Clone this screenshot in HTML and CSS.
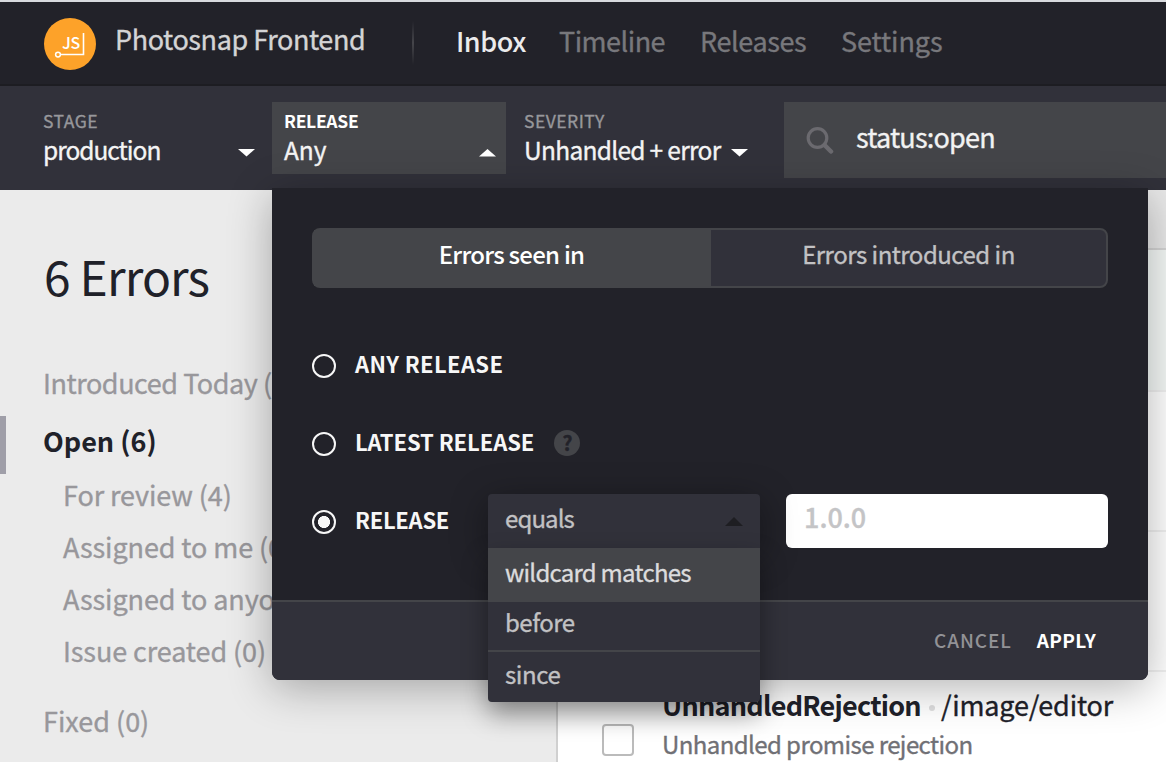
FILE: index.html
```html
<!DOCTYPE html>
<html lang="en">
<head>
<meta charset="utf-8">
<title>Photosnap Frontend – Inbox</title>
<link rel="stylesheet" href="styles.css">
</head>
<body>
<header class="topbar">
  <svg class="logo" width="52" height="52" viewBox="0 0 52 52">
    <circle cx="26" cy="26" r="26" fill="#fda229"/>
    <path d="M39.5 15V36.5H16.5" fill="none" stroke="#fff" stroke-width="1.6"/>
    <circle cx="14" cy="36.6" r="2.4" fill="none" stroke="#fff" stroke-width="1.5"/>
    <text class="logo-text" x="18" y="31.3">JS</text>
  </svg>
  <div class="project">Photosnap Frontend</div>
  <div class="divider"></div>
  <nav class="nav">
    <a class="nav-link active">Inbox</a>
    <a class="nav-link timeline">Timeline</a>
    <a class="nav-link releases">Releases</a>
    <a class="nav-link settings">Settings</a>
  </nav>
</header>

<section class="filters">
  <div class="filter stage">
    <div class="filter-label">STAGE</div>
    <div class="filter-value"><span>production</span><svg class="caret" width="17" height="8" viewBox="0 0 17 8"><path d="M0 0H17L8.500 7.500Z" fill="#fff"/></svg></div>
  </div>
  <div class="filter release open">
    <div class="filter-label">RELEASE</div>
    <div class="filter-value any"><span>Any</span><svg class="caret" width="17" height="8" viewBox="0 0 17 8"><path d="M0 7.500H17L8.500 0Z" fill="#fff"/></svg></div>
  </div>
  <div class="filter severity">
    <div class="filter-label">SEVERITY</div>
    <div class="filter-value"><span>Unhandled + error</span><svg class="caret" width="17" height="8" viewBox="0 0 17 8"><path d="M0 0H17L8.500 7.500Z" fill="#fff"/></svg></div>
  </div>
  <div class="search">
    <svg class="search-icon" width="28" height="28" viewBox="0 0 28 28" fill="none" stroke="#6b6a6f"><circle cx="11.500" cy="12" r="9.300" stroke-width="3.200"/><path d="M18.500 19L25 25.500" stroke-width="4.500" stroke-linecap="round"/></svg>
    <span class="search-text">status:open</span>
  </div>
</section>

<div class="content">
  <aside class="sidebar">
    <h1 class="heading">6 Errors</h1>
    <ul class="views">
      <li class="view intro">Introduced Today (0)</li>
      <li class="view current">Open (6)</li>
      <li class="view sub">For review (4)</li>
      <li class="view sub">Assigned to me (0)</li>
      <li class="view sub">Assigned to anyone (0)</li>
      <li class="view sub">Issue created (0)</li>
      <li class="view fixed">Fixed (0)</li>
    </ul>
  </aside>
  <main class="list">
    <div class="list-head"></div>
    <div class="row selected"></div>
    <div class="row"></div>
    <div class="row"></div>
    <div class="row last">
      <div class="checkbox"></div>
      <div class="error">
        <div class="error-title"><b class="error-name">UnhandledRejection</b><i class="dot"></i><span class="error-path">/image/editor</span></div>
        <div class="error-message">Unhandled promise rejection</div>
      </div>
    </div>
  </main>
</div>

<div class="panel">
  <div class="panel-body">
    <div class="tabs">
      <div class="tab selected">Errors seen in</div>
      <div class="tab other">Errors introduced in</div>
    </div>
    <div class="options">
      <div class="option"><span class="radio"></span><span class="option-label wide">ANY RELEASE</span></div>
      <div class="option"><span class="radio"></span><span class="option-label">LATEST RELEASE</span><span class="help">?</span></div>
      <div class="option">
        <span class="radio checked"></span><span class="option-label named">RELEASE</span>
        <div class="select">
          <span>equals</span>
          <svg class="select-caret" width="18" height="9" viewBox="0 0 18 9"><path d="M0 9H18L9 0Z" fill="#1e1e22"/></svg>
          <div class="menu">
            <div class="item hover">wildcard matches</div>
            <div class="item before">before</div>
            <div class="item since">since</div>
          </div>
        </div>
        <div class="version">1.0.0</div>
      </div>
    </div>
  </div>
  <div class="panel-foot">
    <span class="cancel">CANCEL</span>
    <span class="apply">APPLY</span>
  </div>
</div>
</body>
</html>
```

FILE: styles.css
```css
* { box-sizing: border-box; }
body {
  margin: 0;
  width: 1166px;
  height: 762px;
  overflow: hidden;
  position: relative;
  background: #ebebeb;
  color: #202129;
  font-family: "Noto Sans CJK SC", "Noto Sans", sans-serif;
  font-size: 27px;
  white-space: nowrap;
  -webkit-text-stroke: .35px currentColor;
}

/* Top bar */
.topbar {
  height: 86px;
  padding-left: 44px;
  display: flex;
  align-items: center;
  background: #222229;
  border-top: 2px solid #d8dade;
  border-bottom: 2px solid #1d1d22;
}
.logo { margin-top: 2px; }
.logo-text { font-size: 16px; font-weight: 500; fill: #fff; letter-spacing: -.3px; -webkit-text-stroke: 0; }
.project {
  width: 296px;
  padding: 0 0 8px 19px;
  line-height: 40px;
  letter-spacing: -.42px;
  color: #d4d4d5;
}
.divider {
  width: 2px;
  height: 44px;
  margin-left: 20px;
  background: linear-gradient(#222229, #45454a 50%, #222229);
}
.nav { display: flex; margin-left: 42px; padding-bottom: 4px; line-height: 40px; }
.nav-link { color: #78787c; letter-spacing: -.5px; }
.active { width: 103px; color: #ebebec; font-weight: 500; -webkit-text-stroke: 0; }
.timeline { width: 141px; }
.releases { width: 141px; letter-spacing: -.4px; }
.settings { letter-spacing: -.1px; }

/* Filter bar */
.filters { height: 104px; padding: 16px 0 0 32px; display: flex; background: #31313a; }
.filter { height: 72px; padding: 9px 10px 0 12px; }
.filter-label { font-size: 17.5px; line-height: 20px; letter-spacing: .5px; color: #97979b; }
.stage .filter-label { margin-left: -1px; }
.filter-value {
  display: flex;
  justify-content: space-between;
  align-items: center;
  font-size: 24.5px;
  line-height: 38px;
  letter-spacing: -1px;
  color: #f4f4f4;
}
.stage span, .severity span { margin-left: -1px; }
.filter-value.any { letter-spacing: -.1px; }
.caret { margin-top: 6px; }
.stage { width: 240px; padding-right: 17px; }
.release { width: 234px; }
.release.open { background: #444549; }
.open .filter-label { color: #fff; font-weight: 700; letter-spacing: -.3px; -webkit-text-stroke: 0; }
.severity { width: 245px; margin-left: 7px; }
.severity .filter-label { margin-left: -1px; }
.severity .filter-value { letter-spacing: -.7px; }
.search {
  flex: 1;
  height: 76px;
  margin-left: 26px;
  padding: 0 0 0 22px;
  display: flex;
  align-items: center;
  background: #444549;
}
.search-text { padding: 0 0 6px 22px; line-height: 40px; color: #f2f2f2; letter-spacing: -.8px; }

/* Sidebar */
.content { display: flex; height: 572px; }
.sidebar { width: 558px; border-right: 2px solid #d0d0d0; }
.heading {
  height: 168px;
  margin: 0;
  padding: 50px 0 0 44px;
  font-size: 48px;
  line-height: 71px;
  font-weight: 400;
  letter-spacing: -.9px;
  -webkit-text-stroke: 0;
}
.views { margin: 0; padding: 0; list-style: none; color: #98979b; }
.view { height: 58px; padding-left: 44px; line-height: 50px; }
.intro { letter-spacing: -.45px; padding-left: 43px; }
.current { color: #202129; font-weight: 700; border-left: 6px solid #9f9ea8; padding-left: 37px; -webkit-text-stroke: 0; }
.sub { height: 52px; padding-left: 63px; line-height: 41px; letter-spacing: -.1px; }
.fixed { margin-top: 14px; padding-left: 43px; }

/* Error list */
.list { flex: 1; background: #fff; }
.list-head { height: 60px; background: #e8e8e8; border-bottom: 2px solid #d4d4d4; }
.row { height: 140px; background: #fff; border-bottom: 2px solid #f0f0f0; }
.row.selected { height: 142px; background: #f4f8f6; }
.last { display: flex; height: 90px; padding: 13px 0 0 44px; border: 0; }
.checkbox { width: 32px; height: 32px; margin-top: 39px; border: 2px solid #bbb; border-radius: 4px; }
.error { padding-left: 28px; }
.error-title { display: flex; align-items: center; line-height: 40px; }
.error-name { letter-spacing: -.75px; -webkit-text-stroke: 0; }
.error-path { letter-spacing: -.15px; }
.dot { width: 6px; height: 6px; margin: 6px 6px 0 8px; border-radius: 50%; background: #dededf; }
.error-message { font-size: 24px; line-height: 38px; letter-spacing: -.58px; color: #707075; }

/* Release panel */
.panel {
  position: absolute;
  left: 272px;
  top: 188px;
  width: 876px;
  height: 492px;
  border-radius: 0 0 8px 8px;
  background: #222229;
  box-shadow: 0 8px 44px rgba(0, 0, 0, .3);
}
.panel-body { height: 412px; padding: 40px 40px 0; }
.tabs {
  display: flex;
  height: 60px;
  border: 2px solid #444549;
  border-radius: 8px;
  background: #31313a;
  font-size: 24px;
  line-height: 48px;
  text-align: center;
}
.tab { flex: 1; color: #c2c2c4; letter-spacing: -.5px; }
.tab.selected { background: #444549; color: #fff; font-weight: 500; letter-spacing: -.75px; padding-right: 2px; -webkit-text-stroke: 0; }
.options { display: grid; gap: 24px; padding-top: 50px; }
.option { height: 54px; display: flex; align-items: center; }
.radio { width: 24px; height: 24px; margin-top: 2px; border: 2px solid #f7f7f7; border-radius: 50%; }
.checked { background: radial-gradient(circle, #f7f7f7 5.700px, transparent 6.300px); }
.option-label {
  padding: 0 0 5px 19px;
  font-size: 22px;
  line-height: 40px;
  font-weight: 700;
  letter-spacing: -.08px;
  color: #f7f7f7;
  -webkit-text-stroke: 0;
}
.wide { letter-spacing: .35px; }
.named { width: 152px; letter-spacing: -.3px; }
.help {
  width: 26px;
  height: 26px;
  margin-left: 20px;
  border-radius: 50%;
  background: #444549;
  color: #222229;
  font-size: 20px;
  line-height: 26px;
  font-weight: 700;
  text-align: center;
}
.select {
  position: relative;
  display: flex;
  justify-content: space-between;
  width: 272px;
  height: 54px;
  padding: 0 17px;
  border-radius: 4px 4px 0 0;
  background: #31313a;
  box-shadow: 0 8px 36px rgba(0, 0, 0, .4);
  font-size: 24px;
  line-height: 48px;
  letter-spacing: -.9px;
  color: #c2c2c4;
}
.select-caret { margin-top: 23px; }
.menu {
  position: absolute;
  left: 0;
  top: 54px;
  width: 272px;
  height: 154px;
  border-radius: 0 0 4px 4px;
  background: #31313a;
  box-shadow: 0 12px 26px rgba(0, 0, 0, .4);
}
.menu .item { padding-left: 17px; }
.hover { height: 54px; background: #444549; color: #dcdcdd; letter-spacing: -.75px; }
.before { height: 50px; line-height: 40px; border-bottom: 2px solid #444549; letter-spacing: -.5px; }
.since { line-height: 44px; letter-spacing: -.4px; }
.version {
  flex: 1;
  height: 54px;
  margin-left: 26px;
  padding-left: 18px;
  border-radius: 6px;
  background: #fff;
  color: #c4c4c6;
  font-weight: 500;
  line-height: 45px;
}
.panel-foot {
  height: 80px;
  display: flex;
  justify-content: flex-end;
  padding-right: 52px;
  border-top: 2px solid #444549;
  border-radius: 0 0 8px 8px;
  background: #31313a;
  font-size: 19px;
  line-height: 76px;
  -webkit-text-stroke: 0;
}
.cancel { color: #929296; font-weight: 500; letter-spacing: .9px; }
.apply { margin-left: 25px; color: #fff; font-weight: 700; letter-spacing: .3px; }
```
